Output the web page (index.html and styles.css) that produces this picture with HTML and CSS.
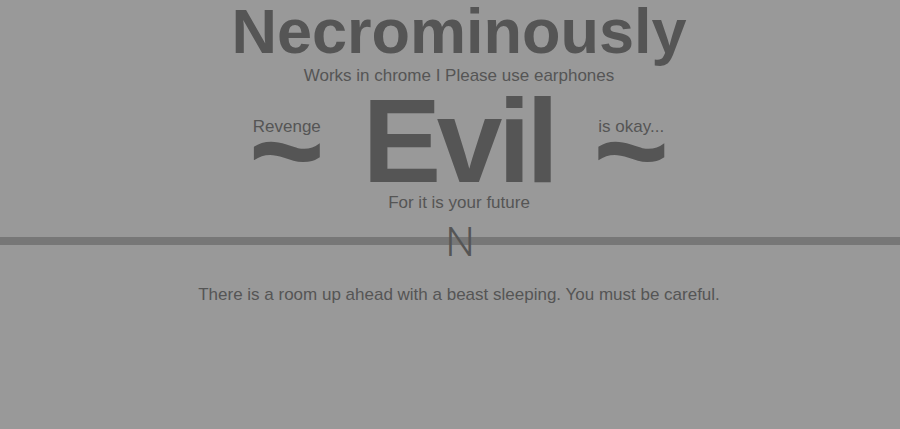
FILE: index.html
```html
<!DOCTYPE html>
<html>
<head>
<meta charset="utf-8">
<link rel="stylesheet" href="styles.css">
</head>
<body>
<div class="page">
  <header class="head">
    <h1 class="title">Necrominously</h1>
    <p class="sub">Works in chrome I Please use earphones</p>
    <div class="evil"><span class="side side-left"><span class="label">Revenge</span><span class="tilde">~</span></span> <span class="word">Evil</span> <span class="side side-right"><span class="label">is okay...</span><span class="tilde">~</span></span></div>
    <p class="tag">For it is your future</p>
  </header>
  <div class="compass">N</div>
  <p class="story">There is a room up ahead with a beast sleeping. You must be careful.</p>
</div>
</body>
</html>
```
FILE: styles.css
```css
html, body {
  margin: 0;
  padding: 0;
  background: #999999;
}
body {
  font-family: "Liberation Sans", Arial, Helvetica, sans-serif;
  color: #555555;
}
.head {
  padding-left: 18px;
  text-align: center;
}
.title {
  margin: 0;
  font-size: 63px;
  line-height: 63px;
  font-weight: bold;
}
.sub {
  margin: 0;
  font-size: 17px;
  line-height: 26px;
}
.evil {
  font-size: 118px;
  line-height: 104px;
  font-weight: bold;
  white-space: nowrap;
}
.word {
  letter-spacing: -4.5px;
}
.side {
  display: inline-block;
  text-align: center;
  line-height: 8px;
}
.side-left {
  margin-right: 5px;
}
.side-right {
  margin-left: 6px;
}
.label {
  display: block;
  font-size: 17px;
  line-height: 20px;
  font-weight: normal;
}
.tilde {
  font-size: 130px;
  vertical-align: -13px;
}
.tag {
  margin: 0;
  font-size: 17px;
  line-height: 19px;
}
.compass {
  height: 60px;
  padding-left: 20px;
  text-align: center;
  font-family: Roboto, "Liberation Sans", sans-serif;
  font-weight: 300;
  font-size: 41px;
  line-height: 60px;
  background: linear-gradient(to bottom, transparent 25px, #777777 25px, #777777 33px, transparent 33px);
}
.story {
  margin: 0;
  padding-top: 10px;
  padding-left: 18px;
  text-align: center;
  font-size: 17px;
  line-height: 25px;
}
```
